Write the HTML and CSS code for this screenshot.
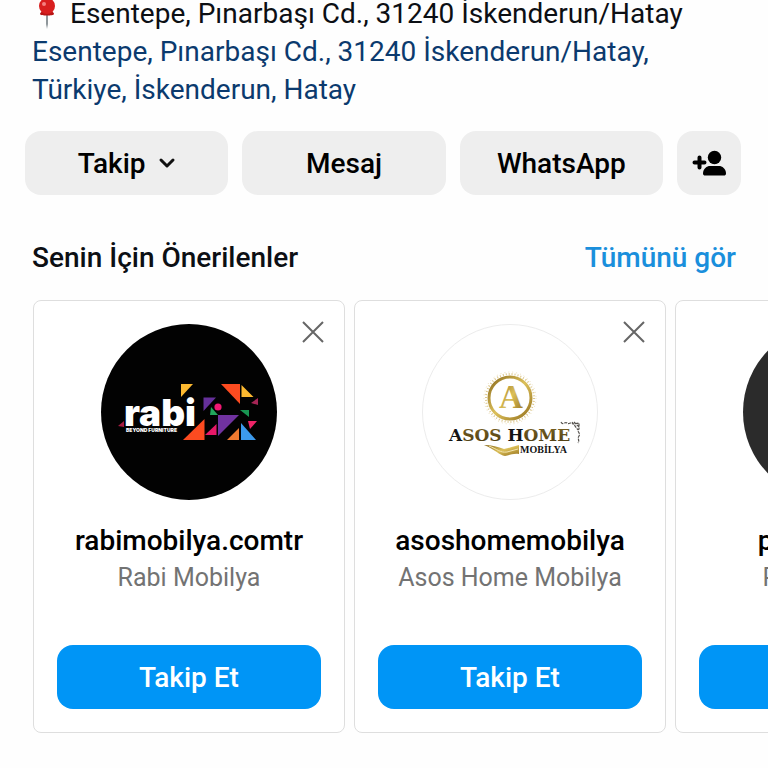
FILE: index.html
```
<!DOCTYPE html>
<html lang="tr">
<head>
    <meta charset="UTF-8">
    <meta name="viewport" content="width=device-width, initial-scale=1.0">
    <title>Profil</title>
    <link rel="stylesheet" href="styles.css">
</head>
<body>
    <div class="bio">
        <p>
            <svg class="pin" viewBox="0 0 18 34" aria-hidden="true">
                <path d="M8 18h2v11l-1 5-1-5z" fill="#8f979b"/>
                <path d="M6 12h6l1 4c2 1 3 2 3 3 0 2-14 2-14 0 0-1 1-2 3-3z" fill="#b81414"/>
                <circle cx="9" cy="11" r="8" fill="#d81f1f"/>
                <circle cx="6" cy="9" r="2" fill="#f58080"/>
            </svg>
            Esentepe, Pınarbaşı Cd., 31240 İskenderun/Hatay
        </p>
        <a href="#">Esentepe, Pınarbaşı Cd., 31240 İskenderun/Hatay,<br>Türkiye, İskenderun, Hatay</a>
    </div>

    <div class="actions">
        <button class="btn">Takip
            <svg class="arrow" viewBox="0 0 18 12" aria-hidden="true"><path d="M3 3l6 6 6-6" fill="none" stroke="#111" stroke-width="3" stroke-linecap="round" stroke-linejoin="round"/></svg>
        </button>
        <button class="btn">Mesaj</button>
        <button class="btn">WhatsApp</button>
        <button class="btn btn-icon" aria-label="Kişi öner">
            <svg viewBox="0 0 34 26" aria-hidden="true">
                <path d="M7.500 7.500v10M2.500 12.500h10" stroke="#000" stroke-width="4" stroke-linecap="round"/>
                <circle cx="22.500" cy="7.500" r="6.700"/>
                <path d="M11 23.500C11 18.500 15 16 18 16h9c3 0 7 2.500 7 7.500 0 1.500-1 2-2 2H13c-1 0-2-.5-2-2z"/>
            </svg>
        </button>
    </div>

    <div class="section-head">
        <h2>Senin İçin Önerilenler</h2>
        <a href="#">Tümünü gör</a>
    </div>

    <div class="cards">
        <div class="card">
            <button class="close" aria-label="Kapat">
                <svg viewBox="0 0 22 22"><path d="M1 1l20 20M21 1L1 21" stroke="#666" stroke-width="2"/></svg>
            </button>
            <svg class="avatar" viewBox="0 0 176 176" role="img" aria-label="Rabi">
                <circle cx="88" cy="88" r="88" fill="#020202"/>
                <path d="M80 60h12L80 73z" fill="#fcb930"/>
                <path d="M120 60h19v20z" fill="#fc4b20"/>
                <path d="M140.500 61l12 12h-12z" fill="#fcb930"/>
                <path d="M150 79l7-5v7z" fill="#a52555"/>
                <path d="M102.500 73.500H115L102.500 87z" fill="#65309a"/>
                <circle cx="117" cy="83" r="3.600" fill="#f01872"/>
                <path d="M110 83l7 8h-8z" fill="#22a65c"/>
                <path d="M139 86h9v7z" fill="#189552"/>
                <path d="M117 91h21l-21 21z" fill="#70329f"/>
                <path d="M103.500 95v21H82z" fill="#fc4b20"/>
                <path d="M115.500 100v11H104z" fill="#e81868"/>
                <path d="M147 97h9l-7 8z" fill="#ee2468"/>
                <path d="M138 104v12h-12z" fill="#f07a30"/>
                <path d="M140 99l15 17h-15z" fill="#3c9aec"/>
                <path d="M17 102l6-5v6z" fill="#a51c42"/>
                <text class="rabi" x="23" y="102">rabi</text>
                <text class="rabi-sub" x="25" y="108">BEYOND FURNITURE</text>
            </svg>
            <h3>rabimobilya.comtr</h3>
            <p>Rabi Mobilya</p>
            <button class="follow">Takip Et</button>
        </div>

        <div class="card">
            <button class="close" aria-label="Kapat">
                <svg viewBox="0 0 22 22"><path d="M1 1l20 20M21 1L1 21" stroke="#666" stroke-width="2"/></svg>
            </button>
            <svg class="avatar" viewBox="0 0 176 176" role="img" aria-label="Asos Home">
                <defs>
                    <linearGradient id="gold" x1="0" y1="0" x2="1" y2="1">
                        <stop offset="0" stop-color="#8a6a1c"/>
                        <stop offset=".5" stop-color="#dcc05a"/>
                        <stop offset="1" stop-color="#94701c"/>
                    </linearGradient>
                    <linearGradient id="brown" x1="0" y1="0" x2="0" y2="1">
                        <stop offset="0" stop-color="#7d6522"/>
                        <stop offset="1" stop-color="#4a3a12"/>
                    </linearGradient>
                </defs>
                <circle cx="88" cy="88" r="87.500" fill="#fff" stroke="#ececec"/>
                <circle cx="88" cy="74" r="24" fill="none" stroke="#dcc78c" stroke-width="2" stroke-dasharray="1 2"/>
                <circle cx="88" cy="74" r="26" fill="none" stroke="#ecdfbc" stroke-width="1" stroke-dasharray="1 3"/>
                <circle cx="88" cy="74" r="21" fill="none" stroke="url(#gold)" stroke-width="3"/>
                <text class="asos-a" x="89" y="84" fill="url(#gold)">A</text>
                <text class="asos" x="27" y="117">A<tspan fill="url(#brown)">SOS</tspan> H<tspan fill="url(#brown)">OME</tspan></text>
                <text class="asos-sub" x="98" y="129">MOBİLYA</text>
                <path d="M62 121c8 0 14 2 20 4 6-1 10-3 15-4v9c-5-1-10 1-14 2-6-1-9-6-21-11z" fill="url(#gold)"/>
                <path d="M67 122c8 3 11 7 18 6l11-3" fill="none" stroke="#f3e4ae"/>
                <path d="M139 98c2 4 4-1 6 1s4-2 6 1l6-1v6c-3 2 2 4 0 7s1 4-1 7M150 98l6 8M152 98l5 5" fill="none" stroke="#55524e" stroke-width="1.200" stroke-dasharray="3 1"/>
            </svg>
            <h3>asoshomemobilya</h3>
            <p>Asos Home Mobilya</p>
            <button class="follow">Takip Et</button>
        </div>

        <div class="card">
            <svg class="avatar" viewBox="0 0 176 176" aria-hidden="true">
                <circle cx="88" cy="88" r="88" fill="#2b2b2b"/>
            </svg>
            <h3>perimobilya</h3>
            <p>Peri Mobilya</p>
            <button class="follow">Takip Et</button>
        </div>
    </div>
</body>
</html>
```
FILE: styles.css
```
* {
    box-sizing: border-box;
}
body {
    margin: 0;
    background-color: #fefefe;
    color: #0c0f14;
    font-family: Roboto, "Noto Sans", sans-serif;
    overflow-x: hidden;
}
a {
    text-decoration: none;
}
button {
    border: none;
    padding: 0;
    font-family: inherit;
    cursor: pointer;
}
.bio {
    margin-top: -5px;
    padding: 0 32px;
    font-size: 28px;
    line-height: 38px;
}
.bio p {
    display: flex;
    gap: 14px;
    margin: 0;
}
.bio a {
    display: block;
    color: #0b3a6e;
}
.pin {
    width: 18px;
    height: 34px;
    margin-left: 6px;
}
.actions {
    display: flex;
    gap: 14px;
    margin-top: 22px;
    padding: 0 27px 0 25px;
}
.btn {
    display: flex;
    flex: 1;
    justify-content: center;
    align-items: center;
    gap: 12px;
    height: 64px;
    border-radius: 16px;
    background-color: #eeeeee;
    color: #000;
    font-size: 28px;
    font-weight: 500;
}
.btn-icon {
    flex: 0 0 64px;
}
.btn-icon svg {
    width: 34px;
    height: 26px;
}
.arrow {
    width: 18px;
    height: 12px;
}
.section-head {
    display: flex;
    justify-content: space-between;
    align-items: center;
    margin-top: 44px;
    padding: 0 32px;
    font-size: 28px;
    line-height: 38px;
    font-weight: 500;
}
.section-head h2 {
    margin: 0;
    font-size: 28px;
    font-weight: 500;
}
.section-head a {
    color: #1a8fdc;
}
.cards {
    display: flex;
    gap: 9px;
    margin-top: 23px;
    padding-left: 33px;
    overflow-x: auto;
    scrollbar-width: none;
}
.card {
    position: relative;
    display: flex;
    flex: 0 0 312px;
    flex-direction: column;
    align-items: center;
    padding: 23px;
    border: 1px solid #dedede;
    border-radius: 8px;
    background-color: #fff;
}
.close {
    position: absolute;
    top: 20px;
    right: 20px;
    width: 22px;
    height: 22px;
    background: none;
}
.close svg {
    display: block;
}
.avatar {
    width: 176px;
    height: 176px;
}
.card h3 {
    margin: 22px 0 0;
    font-size: 28px;
    line-height: 38px;
    font-weight: 500;
    color: #000;
}
.card p {
    margin: 0;
    font-size: 25px;
    line-height: 36px;
    color: #737373;
}
.follow {
    align-self: stretch;
    height: 64px;
    margin-top: 49px;
    border-radius: 16px;
    background-color: #0095f6;
    color: #fff;
    font-size: 28px;
    font-weight: 500;
}
.rabi {
    font-family: Inter, sans-serif;
    font-size: 37px;
    font-weight: 900;
    fill: #fff;
}
.rabi-sub {
    font-family: Inter, sans-serif;
    font-size: 5px;
    font-weight: 900;
    fill: #fff;
}
.asos-a {
    font-family: "Liberation Serif", serif;
    font-size: 33px;
    font-weight: bold;
    text-anchor: middle;
}
.asos {
    font-family: "DejaVu Serif", serif;
    font-size: 17px;
    font-weight: bold;
    fill: #141414;
}
.asos-sub {
    font-family: "Liberation Serif", serif;
    font-size: 10px;
    font-weight: bold;
    fill: #141414;
}
```
